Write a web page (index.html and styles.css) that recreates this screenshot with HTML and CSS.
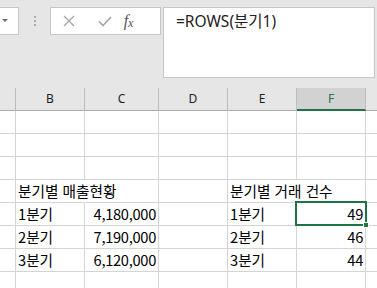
FILE: index.html
```html
<!DOCTYPE html>
<html lang="ko">
<head>
    <meta charset="UTF-8">
    <title>ROWS</title>
    <link rel="stylesheet" href="styles.css">
</head>
<body>
    <div class="toolbar">
        <div class="namebox"><span class="caret"></span></div>
        <div class="grip"><i></i><i></i><i></i></div>
        <div class="fbtns">
            <span><svg width="12" height="12" viewBox="0 0 12 12"><path d="M1 1L11 11M11 1L1 11" stroke="#a6a6a6" stroke-width="1.3" fill="none"/></svg></span>
            <span><svg width="14" height="11" viewBox="0 0 14 11"><path d="M1 5.5L5 9.5L13 1" stroke="#a6a6a6" stroke-width="1.7" fill="none"/></svg></span>
            <span class="fx">f<span class="x">x</span></span>
        </div>
        <div class="formula">=ROWS(분기1)</div>
    </div>

    <div class="sheet">
        <div class="h"></div><div class="h">B</div><div class="h">C</div><div class="h">D</div><div class="h">E</div><div class="h on">F</div><div class="h"></div>

        <div class="c"></div><div class="c"></div><div class="c"></div><div class="c"></div><div class="c"></div><div class="c"></div><div class="c"></div>
        <div class="c"></div><div class="c"></div><div class="c"></div><div class="c"></div><div class="c"></div><div class="c"></div><div class="c"></div>
        <div class="c"></div><div class="c"></div><div class="c"></div><div class="c"></div><div class="c"></div><div class="c"></div><div class="c"></div>

        <div class="c"></div><div class="c over">분기별 매출현황</div><div class="c"></div><div class="c"></div><div class="c over">분기별 거래 건수</div><div class="c"></div><div class="c"></div>

        <div class="c"></div><div class="c">1분기</div><div class="c num">4,180,000</div><div class="c"></div><div class="c">1분기</div>
        <div class="c num active">49<div class="cur"><i></i></div></div><div class="c"></div>

        <div class="c"></div><div class="c">2분기</div><div class="c num">7,190,000</div><div class="c"></div><div class="c">2분기</div><div class="c num">46</div><div class="c"></div>
        <div class="c"></div><div class="c">3분기</div><div class="c num">6,120,000</div><div class="c"></div><div class="c">3분기</div><div class="c num">44</div><div class="c"></div>

        <div class="c"></div><div class="c"></div><div class="c"></div><div class="c"></div><div class="c"></div><div class="c"></div><div class="c"></div>
    </div>
</body>
</html>
```

FILE: styles.css
```css
*{
    margin: 0;
    padding: 0;
    box-sizing: border-box;
}
body{
    width: 377px;
    height: 288px;
    overflow: hidden;
    background: #e6e6e6;
    font-family: "Noto Sans", "Noto Sans CJK KR", sans-serif;
}
.toolbar{
    display: flex;
    align-items: flex-start;
    height: 88px;
    padding-top: 7px;
}
.namebox{
    width: 19px;
    height: 28px;
    background: #fff;
    border: 1px solid #c6c6c6;
    border-left: 0;
    display: flex;
    align-items: center;
    padding-left: 2px;
}
.caret{
    width: 0;
    height: 0;
    margin-top: -2px;
    border-left: 3px solid transparent;
    border-right: 3px solid transparent;
    border-top: 3px solid #6d6d6d;
}
.grip{
    display: flex;
    flex-direction: column;
    gap: 2px;
    margin: 9px 14px 0 15px;
}
.grip i{
    display: block;
    width: 2px;
    height: 2px;
    background: #a9a9a9;
}
.fbtns{
    display: flex;
    width: 111px;
    height: 28px;
    background: #fff;
    border: 1px solid #c6c6c6;
}
.fbtns span{
    flex: 1;
    display: flex;
    align-items: center;
    justify-content: center;
}
.fbtns .fx{
    font-family: "Liberation Serif", serif;
    font-style: italic;
    font-size: 16px;
    color: #555;
}
.fbtns .fx .x{
    display: inline;
    font-size: 12px;
    position: relative;
    top: 2px;
}
.formula{
    margin-left: 2px;
    width: 212px;
    height: 71px;
    background: #fff;
    border: 1px solid #c6c6c6;
    padding: 2px 0 0 12px;
    font-size: 15.5px;
    line-height: 22px;
    color: #222;
}
.sheet{
    display: grid;
    grid-template-columns: 16px 69px 74px 69px 69px 69px 1fr;
    grid-auto-rows: 23px;
    background: #fff;
}
.sheet > :nth-child(7n){
    border-right: 0;
}
.h{
    background: #e6e6e6;
    border-right: 1px solid #bcbcbc;
    border-bottom: 1px solid #ababab;
    font-size: 12px;
    line-height: 21px;
    text-align: center;
    color: #222;
}
.h.on{
    background: #d2d2d2;
    color: #217346;
    border-bottom: 2px solid #217346;
}
.c{
    border-right: 1px solid #d4d4d4;
    border-bottom: 1px solid #d4d4d4;
    padding: 0 2px;
    font-family: "Noto Sans CJK KR", sans-serif;
    font-size: 14.67px;
    line-height: 22px;
    white-space: nowrap;
    color: #000;
}
.c.over{
    border-right-color: transparent;
}
.c.num{
    text-align: right;
    letter-spacing: -0.3px;
}
.c.active{
    position: relative;
}
.cur{
    position: absolute;
    top: -2px;
    left: -2px;
    right: -2px;
    bottom: -1px;
    border: 2px solid #217346;
}
.cur i{
    position: absolute;
    right: -4px;
    bottom: -4px;
    width: 6px;
    height: 6px;
    background: #217346;
    border: 1px solid #fff;
}
```
